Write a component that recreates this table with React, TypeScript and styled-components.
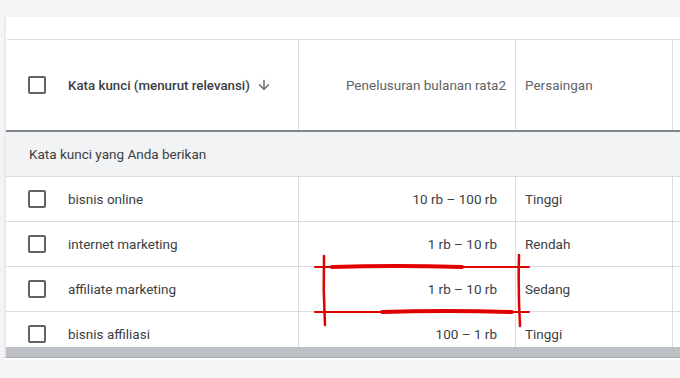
import React from 'react'
import styled, { createGlobalStyle } from 'styled-components'

type Keyword = {
    text: string
    volume: string
    competition: string
}

const keywords: Keyword[] = [
    { text: 'bisnis online', volume: '10 rb – 100 rb', competition: 'Tinggi' },
    { text: 'internet marketing', volume: '1 rb – 10 rb', competition: 'Rendah' },
    { text: 'affiliate marketing', volume: '1 rb – 10 rb', competition: 'Sedang' },
    { text: 'bisnis affiliasi', volume: '100 – 1 rb', competition: 'Tinggi' },
]

const GlobalStyle = createGlobalStyle`
    html, body {
        margin: 0;
        padding: 0;
        background: #f4f4f4;
        font-family: Roboto, 'Liberation Sans', Arial, sans-serif;
        color: #3c4043;
        overflow: hidden;
    }
`

const SortArrow = () => (
    <svg width="16" height="16" viewBox="0 0 24 24" fill="#5f6368">
        <path d="M20 12l-1.41-1.41L13 16.17V4h-2v12.17l-5.58-5.59L4 12l8 8 8-8z" />
    </svg>
)

// hand-drawn red box marking the third row's volume cell
const Marker = () => (
    <MarkerSvg width="230" height="80" viewBox="0 0 230 80">
        <g stroke="#e00000" strokeLinecap="round" fill="none">
            <path d="M10 17 L224 17" strokeWidth="2" />
            <path d="M27 17 Q90 15 157 17" strokeWidth="4" />
            <path d="M10 62 L224 62" strokeWidth="2" />
            <path d="M77 62 Q140 60 207 62" strokeWidth="4" />
            <path d="M19 6 Q18 40 20 75" strokeWidth="2.5" />
            <path d="M214 5 Q213 40 215 76" strokeWidth="2.5" />
        </g>
    </MarkerSvg>
)

export default function App() {
    return (
        <Page>
            <GlobalStyle />
            <Panel>
                <TopStrip />
                <TableArea>
                    <HeaderRow>
                        <KeywordCell>
                            <Checkbox />
                            <HeaderTitle>Kata kunci (menurut relevansi)</HeaderTitle>
                            <SortArrow />
                        </KeywordCell>
                        <NumberCell $header>Penelusuran bulanan rata2</NumberCell>
                        <TextCell $header>Persaingan</TextCell>
                        <RestCell />
                    </HeaderRow>
                    <SectionRow>Kata kunci yang Anda berikan</SectionRow>
                    {keywords.map((k) => (
                        <Row key={k.text}>
                            <KeywordCell>
                                <Checkbox />
                                <span>{k.text}</span>
                            </KeywordCell>
                            <NumberCell>{k.volume}</NumberCell>
                            <TextCell>{k.competition}</TextCell>
                            <RestCell />
                        </Row>
                    ))}
                    <Marker />
                </TableArea>
                <Scrollbar />
            </Panel>
        </Page>
    )
}

const Page = styled.div`
    width: 680px;
    height: 378px;
    padding: 17px 0 0 4px;
    box-sizing: border-box;
`
const Panel = styled.div`
    background: #fff;
    border-left: 2px solid #e8eaed;
    border-bottom: 1px solid #a8acb1;
    box-shadow: 0 2px 0 #fff;
`
const TopStrip = styled.div`
    height: 22px;
    border-bottom: 1px solid #dadce0;
    margin-left: 1px;
`
const TableArea = styled.div`
    position: relative;
    height: 307px;
    overflow: hidden;
    font-size: 13.5px;
`
const Row = styled.div`
    display: grid;
    grid-template-columns: 293px 217px 157px 1fr;
    height: 45px;
    border-bottom: 1px solid #dadce0;
    box-sizing: border-box;
`
const HeaderRow = styled(Row)`
    height: 92px;
    border-bottom: 2px solid #80868b;
`
const SectionRow = styled.div`
    height: 45px;
    box-sizing: border-box;
    display: flex;
    align-items: center;
    padding-left: 23px;
    background: #f1f3f4;
    border-bottom: 1px solid #dadce0;
`
const Cell = styled.div`
    display: flex;
    align-items: center;
    border-right: 1px solid #dadce0;
    box-sizing: border-box;
    white-space: nowrap;
`
const KeywordCell = styled(Cell)`
    padding-left: 22px;
    gap: 22px;
`
const NumberCell = styled(Cell)<{ $header?: boolean }>`
    justify-content: flex-end;
    padding-right: ${(p) => (p.$header ? '9px' : '18px')};
    color: ${(p) => (p.$header ? '#5f6368' : '#3c4043')};
`
const TextCell = styled(Cell)<{ $header?: boolean }>`
    padding-left: 9px;
    color: ${(p) => (p.$header ? '#5f6368' : '#3c4043')};
`
const RestCell = styled.div``
const HeaderTitle = styled.span`
    font-size: 13.3px;
    font-weight: 500;
    color: #3c4043;
    margin-right: -16px;
`
const Checkbox = styled.span`
    width: 14px;
    height: 14px;
    border: 2px solid #5f6368;
    border-radius: 2px;
    flex-shrink: 0;
`
const Scrollbar = styled.div`
    height: 10px;
    background: #bdc1c6;
`
const MarkerSvg = styled.svg`
    position: absolute;
    left: 299px;
    top: 210px;
`
